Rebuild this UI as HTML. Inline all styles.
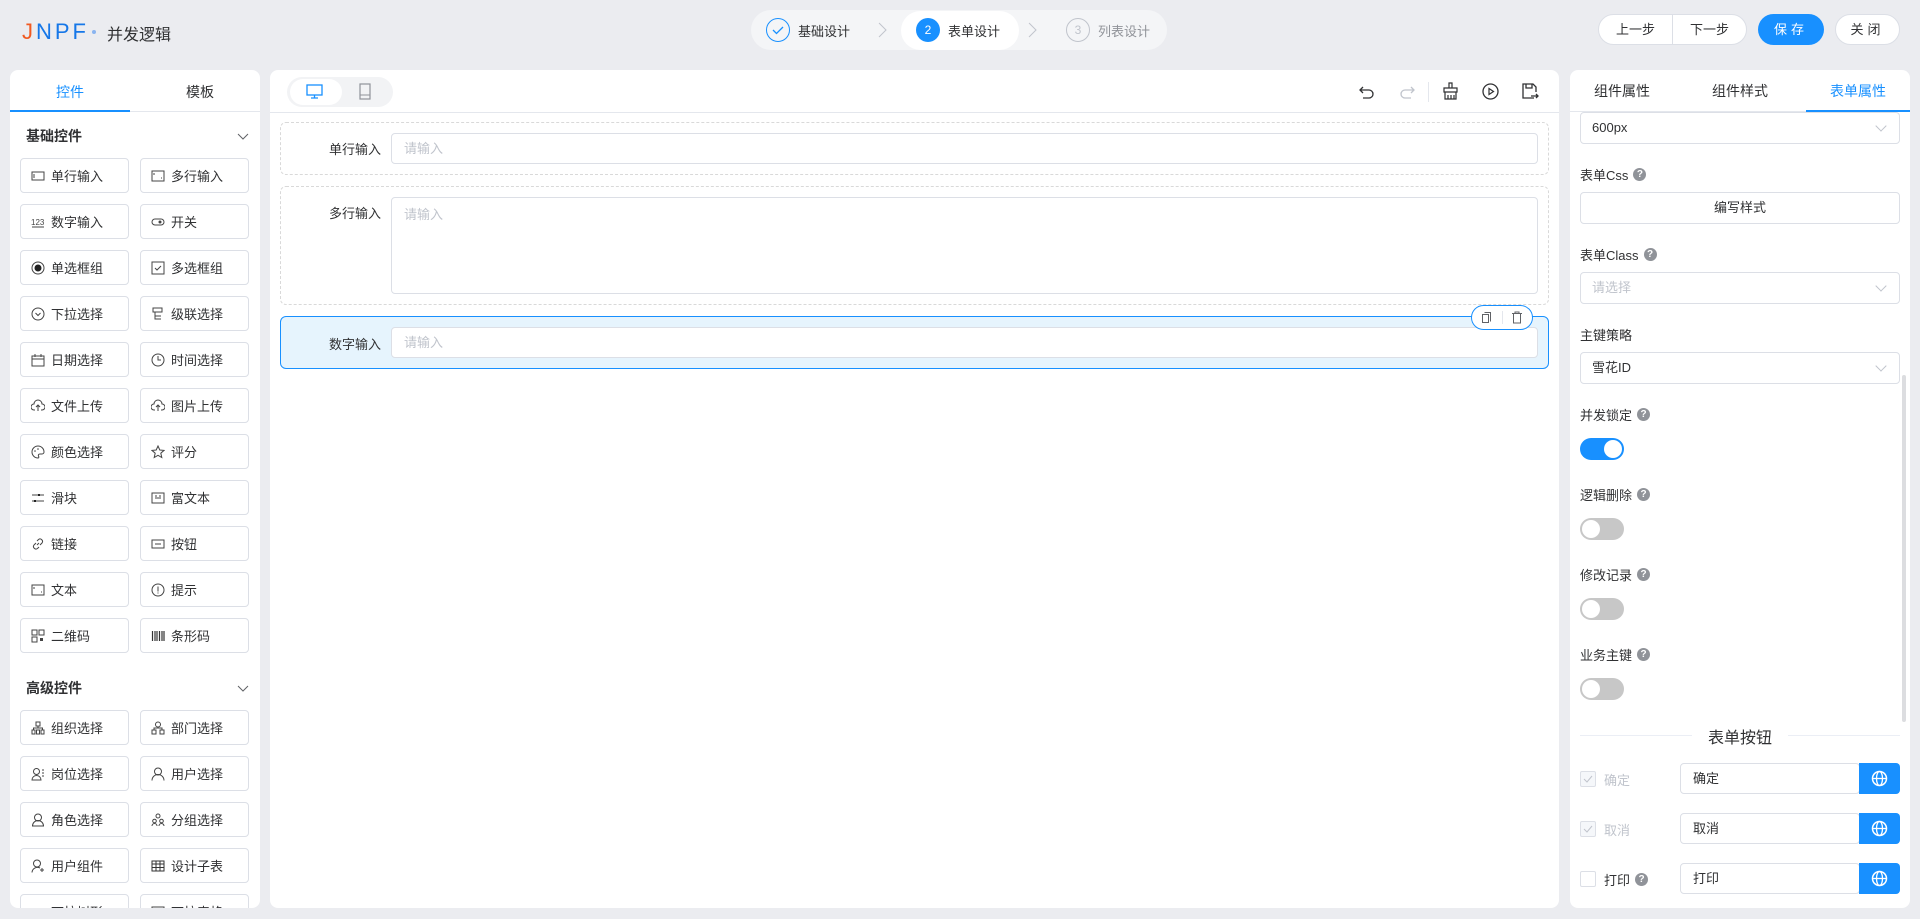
<!DOCTYPE html>
<html><head><meta charset="utf-8"><style>
*{box-sizing:border-box;margin:0;padding:0}
body{width:1920px;height:919px;background:#ebecf0;font-family:"Liberation Sans","Noto Sans CJK SC",sans-serif;font-size:13px;color:#303133;position:relative;overflow:hidden}
.a{position:absolute}
.panel{position:absolute;background:#fff;border-radius:8px}
.btn{position:absolute;width:109px;height:35px;border:1px solid #dcdfe6;border-radius:4px;display:flex;align-items:center;padding-left:10px;font-size:13px;color:#303133}
.btn svg{width:14px;height:14px;margin-right:6px;flex:none}
.inp{position:absolute;border:1px solid #dcdfe6;border-radius:4px;background:#fff;color:#c0c4cc;padding-left:12px;font-size:13px}
.sel{position:absolute;left:1580px;width:320px;height:32px;border:1px solid #dcdfe6;border-radius:4px;padding-left:11px;line-height:30px;font-size:13px}
.sel:after{content:"";position:absolute;right:14px;top:9px;width:7px;height:7px;border-right:1px solid #c0c4cc;border-bottom:1px solid #c0c4cc;transform:rotate(45deg)}
.lbl{position:absolute;left:1580px;font-size:13px;color:#303133;display:flex;align-items:center}
.q{display:inline-block;width:13px;height:13px;border-radius:50%;background:#909399;color:#fff;font-size:10px;line-height:13px;text-align:center;margin-left:5px;font-weight:bold}
.sw{position:absolute;left:1580px;width:44px;height:22px;border-radius:11px;background:#c7c7c7}
.sw:after{content:"";position:absolute;left:2px;top:2px;width:18px;height:18px;border-radius:50%;background:#fff}
.sw.on{background:#1890ff}.sw.on:after{left:24px}
.glob{position:absolute;left:1859px;width:41px;height:31px;background:#1890ff;border-radius:0 4px 4px 0;display:flex;align-items:center;justify-content:center}
.cb{position:absolute;left:1580px;width:16px;height:16px;border:1px solid #dcdfe6;border-radius:2px;background:#f5f7fa}
</style></head><body>
<!-- header -->
<div class="a" style="left:22px;top:19px;font-size:22px;letter-spacing:3px;color:#1677e8"><span style="color:#f05a22">J</span>NPF</div>
<div class="a" style="left:92px;top:30px;width:4px;height:4px;border-radius:50%;background:#8ab4f0"></div>
<div class="a" style="left:107px;top:21px;font-size:16px;color:#303133">并发逻辑</div>
<div class="a" style="left:751px;top:10px;width:416px;height:40px;border-radius:20px;background:#f4f5f7"></div>
<div class="a" style="left:766px;top:18px;width:24px;height:24px;border-radius:50%;border:1px solid #1890ff"></div>
<svg class="a" style="left:771px;top:23px" width="14" height="14"><path d="M2 7l3.5 3.5L12 4" stroke="#1890ff" stroke-width="1.3" fill="none"/></svg>
<div class="a" style="left:798px;top:21px;font-size:13px">基础设计</div>
<svg class="a" style="left:878px;top:22px" width="10" height="16"><path d="M1 1l7 7-7 7" stroke="#c0c4cc" fill="none"/></svg>
<div class="a" style="left:901px;top:11px;width:118px;height:39px;border-radius:20px;background:#fff"></div>
<div class="a" style="left:916px;top:18px;width:24px;height:24px;border-radius:50%;background:#1890ff;color:#fff;text-align:center;line-height:24px;font-size:12px">2</div>
<div class="a" style="left:948px;top:21px;font-size:13px">表单设计</div>
<svg class="a" style="left:1028px;top:22px" width="10" height="16"><path d="M1 1l7 7-7 7" stroke="#c0c4cc" fill="none"/></svg>
<div class="a" style="left:1066px;top:18px;width:24px;height:24px;border-radius:50%;border:1px solid #c0c4cc;color:#c0c4cc;text-align:center;line-height:22px;font-size:12px">3</div>
<div class="a" style="left:1098px;top:21px;font-size:13px;color:#909399">列表设计</div>
<div class="a" style="left:1598px;top:14px;width:149px;height:31px;border:1px solid #dcdfe6;border-radius:16px;background:#fff;display:flex;font-size:13px"><div style="flex:1;text-align:center;line-height:29px;border-right:1px solid #dcdfe6">上一步</div><div style="flex:1;text-align:center;line-height:29px">下一步</div></div>
<div class="a" style="left:1758px;top:14px;width:66px;height:31px;border-radius:16px;background:#1890ff;color:#fff;text-align:center;line-height:31px;letter-spacing:4px;font-size:13px">保存</div>
<div class="a" style="left:1835px;top:14px;width:65px;height:31px;border:1px solid #dcdfe6;border-radius:16px;background:#fff;text-align:center;line-height:29px;letter-spacing:4px;font-size:13px">关闭</div>

<!-- left panel -->
<div class="panel" style="left:10px;top:70px;width:250px;height:838px;overflow:hidden">
<div class="a" style="left:0;top:0;width:250px;height:42px;border-bottom:1px solid #e4e7ed"></div>
<div class="a" style="left:0;top:12px;width:120px;text-align:center;font-size:14px;color:#1890ff">控件</div>
<div class="a" style="left:0;top:40px;width:120px;height:2px;background:#1890ff"></div>
<div class="a" style="left:130px;top:12px;width:120px;text-align:center;font-size:14px">模板</div>
<div class="a" style="left:16px;top:56px;font-size:14px;font-weight:bold">基础控件</div>
<svg class="a" style="left:227px;top:63px" width="12" height="8"><path d="M1 1l5 5 5-5" stroke="#606266" fill="none"/></svg>
<div class="a" style="left:16px;top:608px;font-size:14px;font-weight:bold">高级控件</div>
<svg class="a" style="left:227px;top:615px" width="12" height="8"><path d="M1 1l5 5 5-5" stroke="#606266" fill="none"/></svg>
</div>

<!-- center -->
<div class="panel" style="left:270px;top:70px;width:1289px;height:838px">
<div class="a" style="left:0;top:42px;width:1289px;height:1px;background:#e4e7ed"></div>
<div class="a" style="left:17px;top:7px;width:106px;height:30px;border-radius:15px;background:#f2f3f5"></div>
<div class="a" style="left:20px;top:9px;width:52px;height:26px;border-radius:13px;background:#fff"></div>
<svg class="a" style="left:36px;top:13px" width="17" height="17"><rect x="1" y="2" width="15" height="10" fill="none" stroke="#1890ff" stroke-width="1.3"/><path d="M5 15h7M8.5 12v3" stroke="#1890ff" stroke-width="1.3"/></svg>
<svg class="a" style="left:88px;top:13px" width="14" height="17"><rect x="2" y="1" width="10" height="15" fill="none" stroke="#909399" stroke-width="1.2"/><path d="M2 12h10" stroke="#909399"/></svg>
<svg class="a" style="left:1089px;top:14px" width="16" height="16"><path d="M4 3L1 6l3 3M1 6h9a4 4 0 010 8H4" stroke="#303133" stroke-width="1.3" fill="none"/></svg>
<svg class="a" style="left:1129px;top:14px" width="16" height="16"><path d="M12 3l3 3-3 3M15 6H6a4 4 0 000 8h6" stroke="#c0c4cc" stroke-width="1.3" fill="none"/></svg>
<div class="a" style="left:1158px;top:12px;width:1px;height:20px;background:#e4e7ed"></div>
<svg class="a" style="left:1172px;top:12px" width="17" height="18"><path d="M7 1h3v5H7zM2 6h13v4H2zM3 10v7h11v-7M6 13v4M9 13v4M12 13v4" stroke="#303133" stroke-width="1.2" fill="none"/></svg>
<svg class="a" style="left:1212px;top:13px" width="17" height="17"><circle cx="8.5" cy="8.5" r="7.5" stroke="#303133" stroke-width="1.3" fill="none"/><path d="M7 5.5v6l4.5-3z" stroke="#303133" stroke-width="1.2" fill="none"/></svg>
<svg class="a" style="left:1252px;top:13px" width="17" height="17"><path d="M12 15H1V1h10l3 3v5M4 1v4h6V1M9 13h7M14 11l2 2-2 2" stroke="#303133" stroke-width="1.3" fill="none"/></svg>
</div>
<div class="a" style="left:280px;top:122px;width:1269px;height:53px;border:1px dashed #d9d9d9;border-radius:6px"></div>
<div class="a" style="left:280px;top:139px;width:101px;text-align:right;font-size:13px">单行输入</div>
<div class="inp" style="left:391px;top:133px;width:1147px;height:31px;line-height:29px">请输入</div>
<div class="a" style="left:280px;top:186px;width:1269px;height:119px;border:1px dashed #d9d9d9;border-radius:6px"></div>
<div class="a" style="left:280px;top:203px;width:101px;text-align:right;font-size:13px">多行输入</div>
<div class="inp" style="left:391px;top:197px;width:1147px;height:97px;padding-top:6px">请输入</div>
<div class="a" style="left:280px;top:316px;width:1269px;height:53px;border:1px solid #1890ff;border-radius:6px;background:#e6f4fd"></div>
<div class="a" style="left:280px;top:334px;width:101px;text-align:right;font-size:13px">数字输入</div>
<div class="inp" style="left:391px;top:327px;width:1147px;height:31px;line-height:29px">请输入</div>
<div class="a" style="left:1471px;top:305px;width:62px;height:25px;border:1px solid #1890ff;border-radius:13px;background:#fff"></div>
<div class="a" style="left:1502px;top:311px;width:1px;height:13px;background:#e4e7ed"></div>
<svg class="a" style="left:1481px;top:311px" width="12" height="13"><path d="M3.5 1.5h6v9M1.5 3.5h6v8h-6z" stroke="#606266" fill="none"/></svg>
<svg class="a" style="left:1511px;top:311px" width="12" height="13"><path d="M1 2.5h10M4 2.5V1h4v1.5M2.5 2.5v9.5h7V2.5" stroke="#606266" fill="none"/></svg>

<!-- right panel -->
<div class="panel" style="left:1570px;top:70px;width:340px;height:838px"></div>
<div class="a" style="left:1570px;top:111px;width:340px;height:1px;background:#e4e7ed"></div>
<div class="a" style="left:1570px;top:81px;width:104px;text-align:center;font-size:14px">组件属性</div>
<div class="a" style="left:1688px;top:81px;width:104px;text-align:center;font-size:14px">组件样式</div>
<div class="a" style="left:1806px;top:81px;width:104px;text-align:center;font-size:14px;color:#1890ff">表单属性</div>
<div class="a" style="left:1806px;top:110px;width:104px;height:2px;background:#1890ff"></div>
<div class="sel" style="top:112px;color:#303133">600px</div>
<div class="lbl" style="top:165px">表单Css<span class="q">?</span></div>
<div class="a" style="left:1580px;top:192px;width:320px;height:32px;border:1px solid #dcdfe6;border-radius:4px;text-align:center;line-height:30px">编写样式</div>
<div class="lbl" style="top:245px">表单Class<span class="q">?</span></div>
<div class="sel" style="top:272px;color:#c0c4cc">请选择</div>
<div class="lbl" style="top:325px">主键策略</div>
<div class="sel" style="top:352px;color:#303133">雪花ID</div>
<div class="lbl" style="top:405px">并发锁定<span class="q">?</span></div>
<div class="sw on" style="top:438px"></div>
<div class="lbl" style="top:485px">逻辑删除<span class="q">?</span></div>
<div class="sw" style="top:518px"></div>
<div class="lbl" style="top:565px">修改记录<span class="q">?</span></div>
<div class="sw" style="top:598px"></div>
<div class="lbl" style="top:645px">业务主键<span class="q">?</span></div>
<div class="sw" style="top:678px"></div>
<div class="a" style="left:1902px;top:375px;width:4px;height:347px;border-radius:2px;background:#dcdde0"></div>
<div class="a" style="left:1580px;top:735px;width:112px;height:1px;background:#ebeef5"></div>
<div class="a" style="left:1788px;top:735px;width:112px;height:1px;background:#ebeef5"></div>
<div class="a" style="left:1708px;top:724px;font-size:16px">表单按钮</div>
<div class="cb" style="top:771px"></div><svg class="a" style="left:1583px;top:775px" width="10" height="8"><path d="M1 4l3 3 5-6" stroke="#c0c4cc" fill="none"/></svg>
<div class="a" style="left:1604px;top:770px;color:#c0c4cc">确定</div>
<div class="cb" style="top:821px"></div><svg class="a" style="left:1583px;top:825px" width="10" height="8"><path d="M1 4l3 3 5-6" stroke="#c0c4cc" fill="none"/></svg>
<div class="a" style="left:1604px;top:820px;color:#c0c4cc">取消</div>
<div class="cb" style="top:871px;background:#fff"></div>
<div class="a" style="left:1604px;top:870px;display:flex;align-items:center">打印<span class="q">?</span></div>
<div class="inp" style="left:1680px;top:763px;width:180px;height:31px;line-height:29px;color:#303133">确定</div>
<div class="inp" style="left:1680px;top:813px;width:180px;height:31px;line-height:29px;color:#303133">取消</div>
<div class="inp" style="left:1680px;top:863px;width:180px;height:31px;line-height:29px;color:#303133">打印</div>
<div class="glob" style="top:763px"><svg width="17" height="17"><circle cx="8.5" cy="8.5" r="7" stroke="#fff" stroke-width="1.5" fill="none"/><ellipse cx="8.5" cy="8.5" rx="3" ry="7" stroke="#fff" stroke-width="1.3" fill="none"/><path d="M1.5 8.5h14" stroke="#fff" stroke-width="1.3"/></svg></div>
<div class="glob" style="top:813px"><svg width="17" height="17"><circle cx="8.5" cy="8.5" r="7" stroke="#fff" stroke-width="1.5" fill="none"/><ellipse cx="8.5" cy="8.5" rx="3" ry="7" stroke="#fff" stroke-width="1.3" fill="none"/><path d="M1.5 8.5h14" stroke="#fff" stroke-width="1.3"/></svg></div>
<div class="glob" style="top:863px"><svg width="17" height="17"><circle cx="8.5" cy="8.5" r="7" stroke="#fff" stroke-width="1.5" fill="none"/><ellipse cx="8.5" cy="8.5" rx="3" ry="7" stroke="#fff" stroke-width="1.3" fill="none"/><path d="M1.5 8.5h14" stroke="#fff" stroke-width="1.3"/></svg></div>

<!-- left buttons -->
<div class="a" style="left:10px;top:70px;width:250px;height:838px;overflow:hidden">
<div style="position:relative">
<div class="btn" style="left:10px;top:88px"><svg viewBox="0 0 14 14"><rect x="1" y="3" width="12" height="8" fill="none" stroke="#444"/><path d="M3 5v4" stroke="#444"/></svg>单行输入</div>
<div class="btn" style="left:130px;top:88px"><svg viewBox="0 0 14 14"><rect x="1" y="2" width="12" height="10" fill="none" stroke="#444"/><path d="M3 4v2M10 9h1" stroke="#444"/></svg>多行输入</div>
<div class="btn" style="left:10px;top:134px"><svg viewBox="0 0 14 14"><text x="0" y="10" font-size="8" fill="#444" font-family="Liberation Sans">123</text><path d="M1 12h12" stroke="#444"/></svg>数字输入</div>
<div class="btn" style="left:130px;top:134px"><svg viewBox="0 0 14 14"><rect x="1" y="4" width="12" height="6" rx="3" fill="none" stroke="#444"/><circle cx="9" cy="7" r="1.5" fill="#444"/></svg>开关</div>
<div class="btn" style="left:10px;top:180px"><svg viewBox="0 0 14 14"><circle cx="7" cy="7" r="6" fill="none" stroke="#444"/><circle cx="7" cy="7" r="3.5" fill="#222"/></svg>单选框组</div>
<div class="btn" style="left:130px;top:180px"><svg viewBox="0 0 14 14"><rect x="1" y="1" width="12" height="12" fill="none" stroke="#444"/><path d="M4 7l2 2 4-4" stroke="#444" fill="none"/></svg>多选框组</div>
<div class="btn" style="left:10px;top:226px"><svg viewBox="0 0 14 14"><circle cx="7" cy="7" r="6" fill="none" stroke="#444"/><path d="M4.5 6l2.5 2.5L9.5 6" stroke="#444" fill="none"/></svg>下拉选择</div>
<div class="btn" style="left:130px;top:226px"><svg viewBox="0 0 14 14"><path d="M2 1h9v4H2zM4 5v7h6M4 9h6" stroke="#444" fill="none"/></svg>级联选择</div>
<div class="btn" style="left:10px;top:272px"><svg viewBox="0 0 14 14"><path d="M1 3h12v10H1zM1 6h12M4 1v3M10 1v3" stroke="#444" fill="none"/></svg>日期选择</div>
<div class="btn" style="left:130px;top:272px"><svg viewBox="0 0 14 14"><circle cx="7" cy="7" r="6" fill="none" stroke="#444"/><path d="M7 3v4h3" stroke="#444" fill="none"/></svg>时间选择</div>
<div class="btn" style="left:10px;top:318px"><svg viewBox="0 0 14 14"><path d="M4 11H3a3 3 0 010-6 4 4 0 018 0 3 3 0 010 6h-1M7 12V6M5 8l2-2 2 2" stroke="#444" fill="none"/></svg>文件上传</div>
<div class="btn" style="left:130px;top:318px"><svg viewBox="0 0 14 14"><path d="M4 11H3a3 3 0 010-6 4 4 0 018 0 3 3 0 010 6h-1M7 12V6M5 8l2-2 2 2" stroke="#444" fill="none"/></svg>图片上传</div>
<div class="btn" style="left:10px;top:364px"><svg viewBox="0 0 14 14"><path d="M7 1a6 6 0 100 12c1 0 1-1 .5-2s0-2 1.5-2h2a2 2 0 002-2A6 6 0 007 1z" stroke="#444" fill="none"/><circle cx="4" cy="6" r=".8" fill="#444"/><circle cx="7" cy="4" r=".8" fill="#444"/></svg>颜色选择</div>
<div class="btn" style="left:130px;top:364px"><svg viewBox="0 0 14 14"><path d="M7 1l1.8 4 4.2.4-3.2 2.8 1 4.3L7 10.3 3.2 12.5l1-4.3L1 5.4l4.2-.4z" stroke="#444" fill="none"/></svg>评分</div>
<div class="btn" style="left:10px;top:410px"><svg viewBox="0 0 14 14"><path d="M1 4h12M1 10h12" stroke="#444"/><rect x="7" y="3" width="2" height="2" fill="#222"/><rect x="3" y="9" width="2" height="2" fill="#222"/></svg>滑块</div>
<div class="btn" style="left:130px;top:410px"><svg viewBox="0 0 14 14"><rect x="1" y="2" width="12" height="10" fill="none" stroke="#444"/><path d="M4 5h2M8 5h2M4 7h6" stroke="#444"/></svg>富文本</div>
<div class="btn" style="left:10px;top:456px"><svg viewBox="0 0 14 14"><path d="M6 8l2-2M5 6L3 8a2.5 2.5 0 003.5 3.5L8 10M9 8l2-2a2.5 2.5 0 00-3.5-3.5L6 4" stroke="#444" fill="none"/></svg>链接</div>
<div class="btn" style="left:130px;top:456px"><svg viewBox="0 0 14 14"><rect x="1" y="3" width="12" height="8" fill="none" stroke="#444"/><path d="M4 7h6" stroke="#444"/></svg>按钮</div>
<div class="btn" style="left:10px;top:502px"><svg viewBox="0 0 14 14"><rect x="1" y="2" width="12" height="10" fill="none" stroke="#444"/><path d="M3 4v2M10 9h1" stroke="#444"/></svg>文本</div>
<div class="btn" style="left:130px;top:502px"><svg viewBox="0 0 14 14"><circle cx="7" cy="7" r="6" fill="none" stroke="#444"/><path d="M7 3.5v5M7 9.5v1" stroke="#444"/></svg>提示</div>
<div class="btn" style="left:10px;top:548px"><svg viewBox="0 0 14 14"><path d="M1 1h5v5H1zM8 1h5v5H8zM1 8h5v5H1z" stroke="#444" fill="none"/><path d="M9 9h3v3H9z" fill="#444"/></svg>二维码</div>
<div class="btn" style="left:130px;top:548px"><svg viewBox="0 0 14 14"><path d="M1.5 2v10M4 2v10M6 2v10M8.5 2v10M11 2v10M13 2v10" stroke="#333" stroke-width="1.2"/></svg>条形码</div>
<div class="btn" style="left:10px;top:640px"><svg viewBox="0 0 14 14"><path d="M5 1h4v4H5zM1 9h3v4H1zM5.5 9h3v4h-3zM10 9h3v4h-3zM7 5v2M2.5 9V7h9v2" stroke="#444" fill="none"/></svg>组织选择</div>
<div class="btn" style="left:130px;top:640px"><svg viewBox="0 0 14 14"><circle cx="7" cy="3.5" r="2.5" fill="none" stroke="#444"/><path d="M1 9h4v4H1zM9 9h4v4H9zM3 9V7h8v2" stroke="#444" fill="none"/></svg>部门选择</div>
<div class="btn" style="left:10px;top:686px"><svg viewBox="0 0 14 14"><circle cx="5.5" cy="4.5" r="3" fill="none" stroke="#444"/><path d="M1 13a4.5 4.5 0 019 0zM11 3h2M11 6h2M11 9h2" stroke="#444" fill="none"/></svg>岗位选择</div>
<div class="btn" style="left:130px;top:686px"><svg viewBox="0 0 14 14"><circle cx="7" cy="4.5" r="3.5" fill="none" stroke="#444"/><path d="M1 13.5a6 6 0 0112 0" stroke="#444" fill="none"/></svg>用户选择</div>
<div class="btn" style="left:10px;top:732px"><svg viewBox="0 0 14 14"><circle cx="7" cy="4.5" r="3.5" fill="none" stroke="#444"/><path d="M1.5 13a5.5 5.5 0 0111 0z" stroke="#444" fill="none"/></svg>角色选择</div>
<div class="btn" style="left:130px;top:732px"><svg viewBox="0 0 14 14"><circle cx="7" cy="3" r="2" fill="none" stroke="#444"/><circle cx="3.5" cy="8" r="1.8" fill="none" stroke="#444"/><circle cx="10.5" cy="8" r="1.8" fill="none" stroke="#444"/><path d="M1 13a2.5 2.5 0 015 0M8 13a2.5 2.5 0 015 0" stroke="#444" fill="none"/></svg>分组选择</div>
<div class="btn" style="left:10px;top:778px"><svg viewBox="0 0 14 14"><circle cx="6" cy="4.5" r="3.5" fill="none" stroke="#444"/><path d="M1 13.5a5.5 5.5 0 018-4.5M11 9v4M9 11h4" stroke="#444" fill="none"/></svg>用户组件</div>
<div class="btn" style="left:130px;top:778px"><svg viewBox="0 0 14 14"><path d="M1 2h12v10H1zM1 5h12M5 2v10M9 2v10M1 8.5h12" stroke="#333" fill="none"/></svg>设计子表</div>
<div class="btn" style="left:10px;top:824px"><svg viewBox="0 0 14 14"><circle cx="4" cy="5" r="1.5" fill="#444"/></svg>下拉树形</div>
<div class="btn" style="left:130px;top:824px"><svg viewBox="0 0 14 14"><rect x="1" y="2" width="12" height="10" fill="none" stroke="#444"/></svg>下拉表格</div>
</div></div>
</body></html>
